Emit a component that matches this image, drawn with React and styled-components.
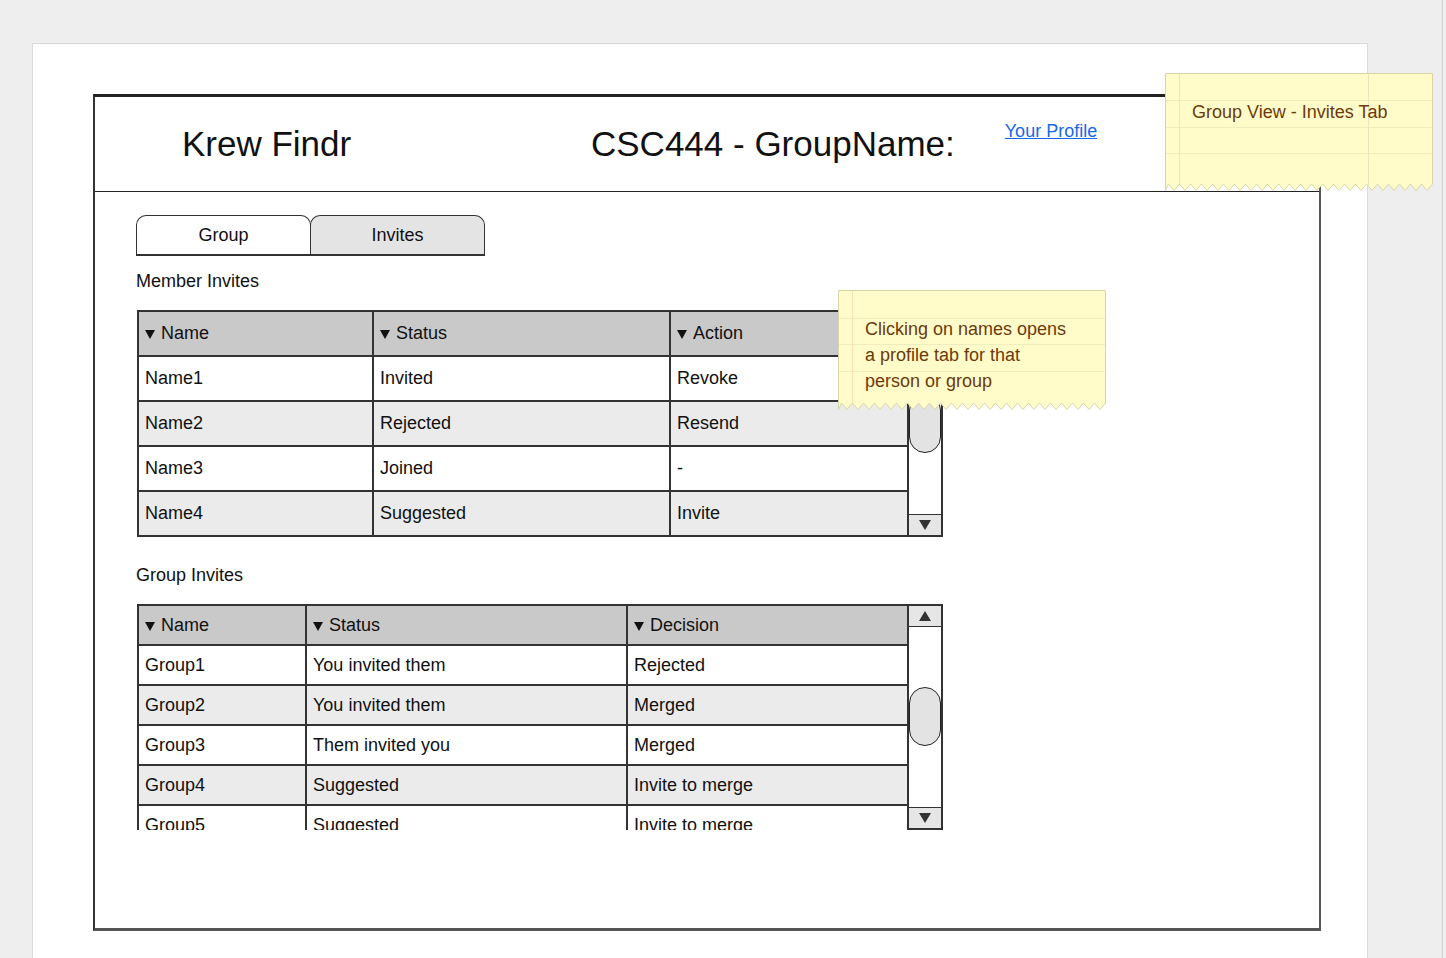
import React from 'react';
import styled, { createGlobalStyle } from 'styled-components';

const GlobalStyle = createGlobalStyle`
  html, body {
    margin: 0;
    padding: 0;
    background: #eeeeee;
  }
  body {
    font-family: "Liberation Sans", Arial, sans-serif;
    color: #111;
  }
  * { box-sizing: border-box; }
`;

const memberRows = [
  ['Name1', 'Invited', 'Revoke'],
  ['Name2', 'Rejected', 'Resend'],
  ['Name3', 'Joined', '-'],
  ['Name4', 'Suggested', 'Invite'],
];

const groupRows = [
  ['Group1', 'You invited them', 'Rejected'],
  ['Group2', 'You invited them', 'Merged'],
  ['Group3', 'Them invited you', 'Merged'],
  ['Group4', 'Suggested', 'Invite to merge'],
  ['Group5', 'Suggested', 'Invite to merge'],
];

// sticky note outline with zigzag bottom + ruled lines
const NoteShape = ({ w, h, lines, edgeAt }) => {
  const tooth = 11;
  const depth = 7;
  const body = h - depth;
  let d = `M0.5 0.5 H${w - 0.5} V${body}`;
  for (let x = w - 0.5; x > 0.5; x -= tooth) {
    const mid = Math.max(x - tooth / 2, 0.5);
    const next = Math.max(x - tooth, 0.5);
    d += ` L${mid} ${h - 0.5} L${next} ${body}`;
  }
  d += ' Z';
  return (
    <NoteSvg width={w} height={h} viewBox={`0 0 ${w} ${h}`}>
      <path d={d} fill="#fffcc9" stroke="#d9d6a6" strokeWidth="1" />
      {lines.map((y) => (
        <line key={y} x1="1" x2={w - 1} y1={y} y2={y} stroke="#f1ecbb" strokeWidth="1" />
      ))}
      <line x1="14.5" x2="14.5" y1="1" y2={body} stroke="#f7dfba" strokeWidth="1" />
      {edgeAt && (
        <line x1={edgeAt} x2={edgeAt} y1="1" y2={body + 3} stroke="#e9e6bd" strokeWidth="1" />
      )}
    </NoteSvg>
  );
};

const Triangle = ({ dir = 'down', size = 6 }) => <Tri $dir={dir} $size={size} />;

const Scrollbar = ({ offset }) => (
  <ScrollTrack>
    <ArrowBox $pos="top"><Triangle dir="up" /></ArrowBox>
    <ThumbLane $offset={offset}>
      <Thumb />
    </ThumbLane>
    <ArrowBox $pos="bottom"><Triangle dir="down" /></ArrowBox>
  </ScrollTrack>
);

const DataTable = ({ headers, rows, cols, rowHeight, clip, thumb }) => (
  <TableWrap $clip={clip}>
    <Grid $cols={cols} $rowHeight={rowHeight}>
      {headers.map((h) => (
        <HeadCell key={h}>
          <SortArrow />
          {h}
        </HeadCell>
      ))}
      {rows.map((row, i) =>
        row.map((cell, j) => (
          <Cell key={`${i}-${j}`} $alt={i % 2 === 1}>
            {cell}
          </Cell>
        ))
      )}
    </Grid>
    <Scrollbar offset={thumb} />
  </TableWrap>
);

export default function App() {
  return (
    <>
      <GlobalStyle />
      <Page>
        <Canvas>
          <Paper>
            <Frame>
              <Header>
                <Brand>Krew Findr</Brand>
                <Title>CSC444 - GroupName:</Title>
                <ProfileLink href="#">Your Profile</ProfileLink>
              </Header>
              <Body>
                <Tabs>
                  <Tab>Group</Tab>
                  <Tab $muted>Invites</Tab>
                </Tabs>
                <SectionLabel>Member Invites</SectionLabel>
                <DataTable
                  headers={['Name', 'Status', 'Action']}
                  rows={memberRows}
                  cols="233px 295px 236px"
                  rowHeight={43}
                  thumb={61}
                />
                <SectionLabel $gap={28}>Group Invites</SectionLabel>
                <DataTable
                  headers={['Name', 'Status', 'Decision']}
                  rows={groupRows}
                  cols="166px 319px 279px"
                  rowHeight={38}
                  clip={226}
                  thumb={60}
                />
              </Body>
            </Frame>
          </Paper>

          <Note $x={838} $y={290} $h={120}>
            <NoteShape w={268} h={120} lines={[28.5, 54.5, 81.5]} />
            <NoteText>
              Clicking on names opens
              <br />
              a profile tab for that
              <br />
              person or group
            </NoteText>
          </Note>

          <Note $x={1165} $y={73} $h={118}>
            <NoteShape w={268} h={118} lines={[27.5, 54.5, 80.5]} edgeAt={203.5} />
            <NoteText>Group View - Invites Tab</NoteText>
          </Note>
        </Canvas>
        <EdgeStrip />
      </Page>
    </>
  );
}

const Page = styled.div`
  display: flex;
  height: 958px;
  overflow: hidden;
  background: #eeeeee;
`;

const Canvas = styled.div`
  position: relative;
  flex: 1;
  padding: 43px 0 0 32px;
`;

const EdgeStrip = styled.div`
  width: 4px;
  border-left: 1px solid #d3d3d3;
  background: #f0f0f0;
`;

const Paper = styled.div`
  width: 1336px;
  height: 1000px;
  background: #fff;
  border: 1px solid #d9d9d9;
  padding: 50px 0 0 60px;
`;

const Frame = styled.div`
  width: 1228px;
  height: 837px;
  display: flex;
  flex-direction: column;
  border-top: 3px solid #222;
  border-left: 2px solid #333;
  border-right: 2px solid #555;
  border-bottom: 3px solid #555;
`;

const Header = styled.div`
  height: 95px;
  display: flex;
  align-items: center;
  padding-left: 87px;
  border-bottom: 1px solid #222;
`;

const Brand = styled.div`
  width: 409px;
  font-size: 35px;
  color: #111;
`;

const Title = styled.div`
  font-size: 35px;
  color: #111;
`;

const ProfileLink = styled.a`
  align-self: flex-start;
  margin: 24px 0 0 50px;
  font-size: 18px;
  color: #1769e8;
  text-decoration: underline;
`;

const Body = styled.div`
  flex: 1;
  padding: 23px 0 0 41px;
`;

const Tabs = styled.div`
  display: flex;
`;

const Tab = styled.div`
  width: 175px;
  height: 41px;
  display: flex;
  align-items: center;
  justify-content: center;
  font-size: 18px;
  color: #111;
  background: ${(p) => (p.$muted ? '#e4e4e4' : '#fff')};
  border: 1.5px solid #333;
  border-bottom-width: 2px;
  border-radius: 10px 10px 0 0;
  & + & {
    margin-left: -1px;
  }
`;

const SectionLabel = styled.div`
  font-size: 18px;
  line-height: 21px;
  margin: ${(p) => p.$gap || 15}px 0 18px;
  color: #111;
`;

const TableWrap = styled.div`
  display: flex;
  width: 806px;
  margin-left: 1px;
  height: ${(p) => (p.$clip ? `${p.$clip}px` : 'auto')};
  overflow: hidden;
`;

const Grid = styled.div`
  align-self: flex-start;
  width: 772px;
  display: grid;
  grid-template-columns: ${(p) => p.$cols};
  grid-auto-rows: ${(p) => p.$rowHeight}px;
  gap: 2px;
  background: #333;
  border: 2px solid #333;
`;

const Cell = styled.div`
  display: flex;
  align-items: center;
  padding: 0 6px;
  font-size: 18px;
  color: #111;
  background: ${(p) => (p.$alt ? '#ebebeb' : '#fff')};
  white-space: nowrap;
`;

const HeadCell = styled(Cell)`
  background: #c9c9c9;
`;

const SortArrow = styled.span`
  width: 0;
  height: 0;
  border-left: 5.5px solid transparent;
  border-right: 5.5px solid transparent;
  border-top: 9px solid #111;
  margin-right: 6px;
  margin-top: 2px;
`;

const ScrollTrack = styled.div`
  width: 34px;
  display: flex;
  flex-direction: column;
  background: #fff;
  border: 2px solid #333;
  border-left: none;
`;

const ArrowBox = styled.div`
  height: 21px;
  display: flex;
  align-items: center;
  justify-content: center;
  background: #e6e6e6;
  ${(p) => (p.$pos === 'top' ? 'border-bottom: 1px solid #333;' : 'border-top: 1px solid #333;')}
`;

const Tri = styled.span`
  width: 0;
  height: 0;
  border-left: ${(p) => p.$size}px solid transparent;
  border-right: ${(p) => p.$size}px solid transparent;
  ${(p) =>
    p.$dir === 'up'
      ? `border-bottom: ${p.$size * 1.7}px solid #333;`
      : `border-top: ${p.$size * 1.7}px solid #333;`}
`;

const ThumbLane = styled.div`
  flex: 1;
  padding-top: ${(p) => p.$offset}px;
`;

const Thumb = styled.div`
  height: 59px;
  background: #e3e3e3;
  border: 1.5px solid #222;
  border-radius: 16px;
`;

const Note = styled.div`
  position: absolute;
  left: ${(p) => p.$x}px;
  top: ${(p) => p.$y}px;
  width: 268px;
  height: ${(p) => p.$h}px;
`;

const NoteSvg = styled.svg`
  position: absolute;
  left: 0;
  top: 0;
`;

const NoteText = styled.div`
  position: relative;
  padding: 26px 0 0 27px;
  font-size: 18px;
  line-height: 26px;
  color: #6b3a0c;
`;
